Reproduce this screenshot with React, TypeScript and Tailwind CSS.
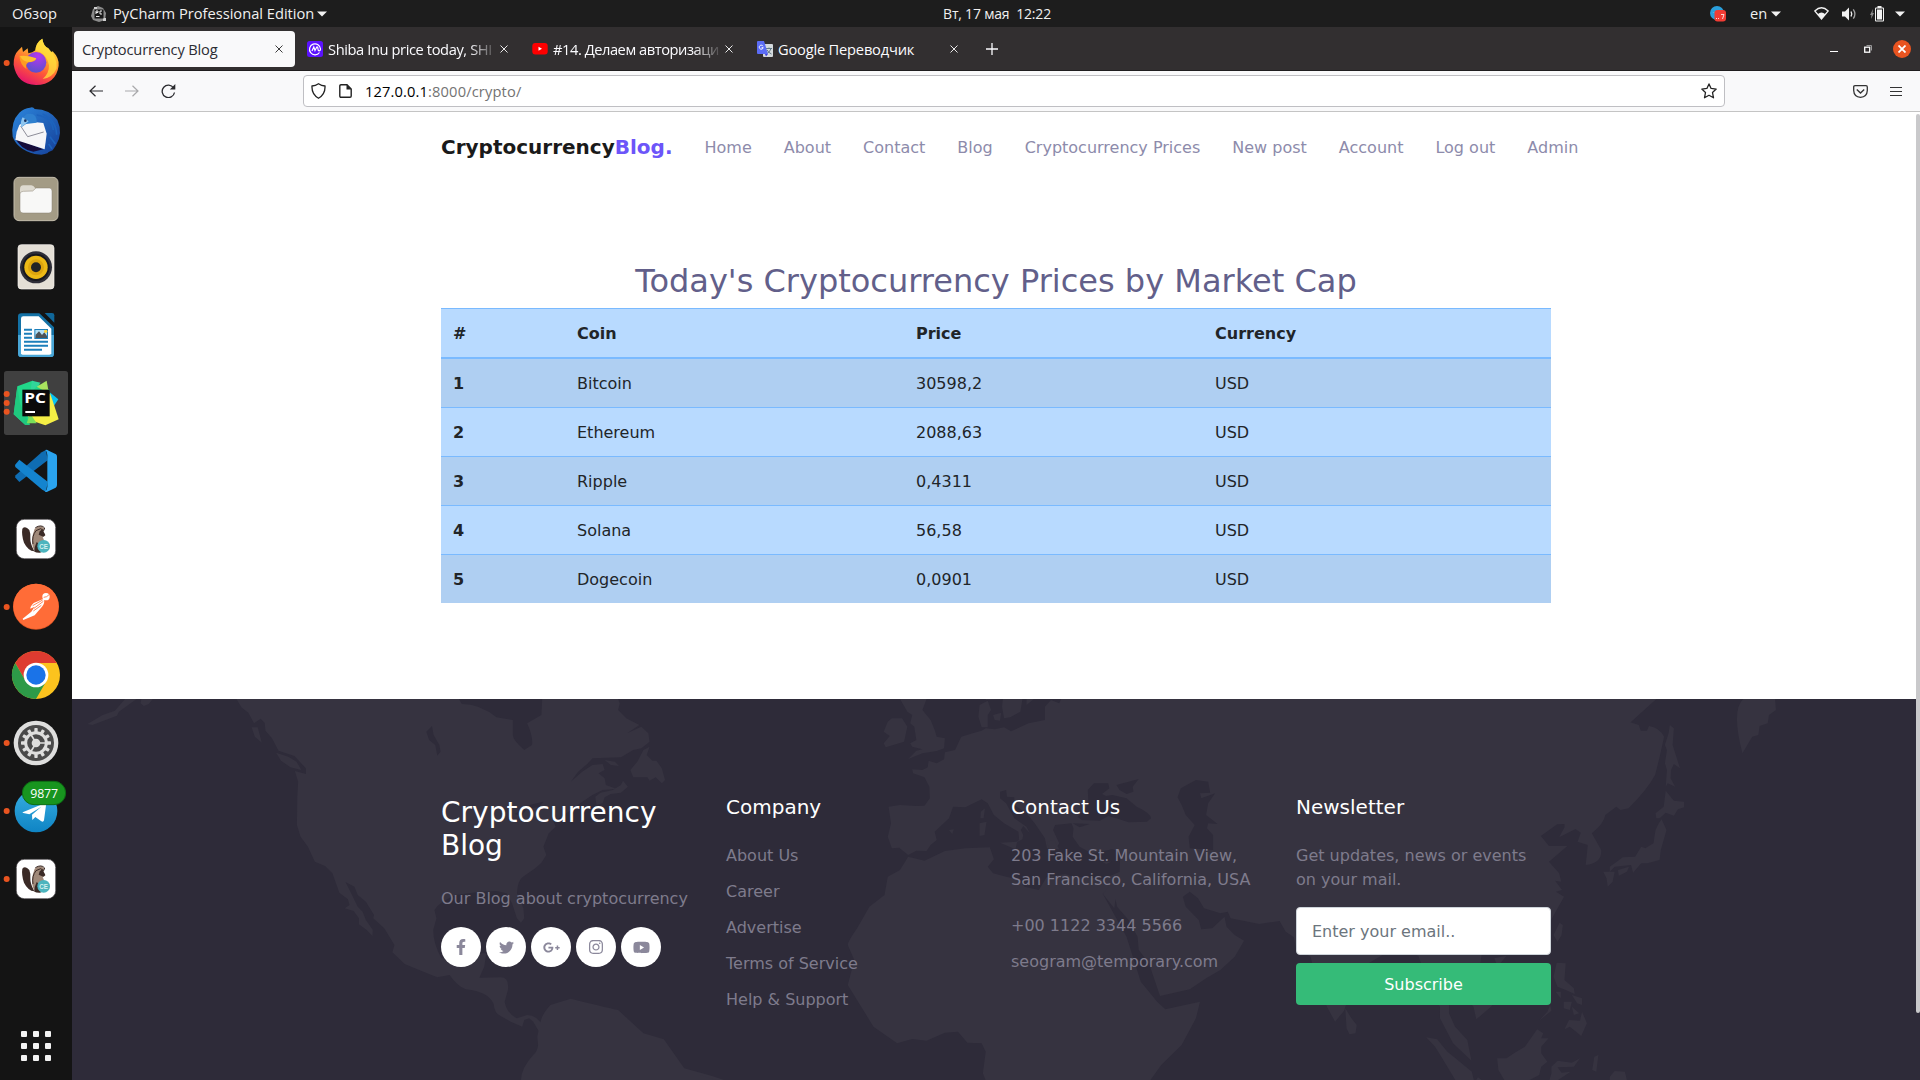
import type { ReactNode } from 'react';
import { FaFacebookF, FaTwitter, FaGooglePlusG, FaInstagram, FaYoutube } from 'react-icons/fa';

const SHELL = "font-['Open_Sans','Noto_Sans',sans-serif]";

/* ---------- Dock ---------- */

function DockItem({ y, dots = 0, active = false, children }: { y: number; dots?: number; active?: boolean; children: ReactNode }) {
  const c = y + 102;
  return (
    <svg className="block h-[68px] w-[72px] shrink-0" viewBox={`0 ${y} 216 204`}>
      {active && <rect x="12" y={y + 6} width="192" height="192" rx="8" fill="#404040" />}
      {children}
      {dots === 1 && <circle cx="20" cy={c} r="9" fill="#e95420" />}
      {dots === 3 && [-27, 0, 26].map((d) => <circle key={d} cx="20" cy={c + d} r="9" fill="#e95420" />)}
    </svg>
  );
}

function Beaver() {
  return (
    <g>
      <rect x="49" y="478" width="118" height="118" rx="24" fill="#fff" stroke="#4b474b" strokeWidth="2" />
      <path d="M67 506Q76 496 88 510Q92 520 91 534Q90 550 103 574Q84 572 72 548Q64 524 67 506Z" fill="#3a2a26" />
      <path d="M104 506Q114 496 126 499L133 506L130 514L136 527L128 531L134 545L126 577L104 574Q92 552 98 526Z" fill="#a08979" />
      <path d="M106 503Q124 492 134 504L131 512L122 506L108 512Q95 528 99 552" fill="none" stroke="#3a2a26" strokeWidth="3" />
      <path d="M127 508L136 525L130 530L116 524L119 514Z" fill="#3a2a26" />
      <path d="M103 575Q102 562 110 546L122 556L122 578Q110 579 103 575Z" fill="#3a2a26" />
      <circle cx="131" cy="559" r="19" fill="#4cb4be" />
      <text x="118" y="567" textLength="26" lengthAdjust="spacingAndGlyphs" fontSize="22" fontWeight="700" fill="#d6f1ef" fontFamily="Liberation Sans, sans-serif">CE</text>
    </g>
  );
}

function Dock() {
  const teeth = Array.from({ length: 12 }, (_, i) => i * 30);
  return (
    <aside className="flex w-[72px] shrink-0 flex-col bg-[#141414] pt-[2px]">
      <DockItem y={27} dots={1}>
        <defs>
          <linearGradient id="ffBody" x1="0.8" y1="0" x2="0.3" y2="1">
            <stop offset="0" stopColor="#fff44f" />
            <stop offset="0.35" stopColor="#ffb02e" />
            <stop offset="0.65" stopColor="#ff5b36" />
            <stop offset="1" stopColor="#e4126f" />
          </linearGradient>
          <radialGradient id="ffGlobe" cx="0.6" cy="0.2" r="0.9">
            <stop offset="0" stopColor="#b438ee" />
            <stop offset="1" stopColor="#5153c8" />
          </radialGradient>
        </defs>
        <path d="M54 92L66 80L69 96L83 85L85 100Q98 98 106 91Q108 67 127 56Q130 78 145 85L153 97L158 94Q178 114 176 137Q168 193 108 195Q50 192 41 134Q40 105 54 92Z" fill="url(#ffBody)" />
        <path d="M106 91Q108 67 127 56Q130 78 145 85Q172 110 170 145Q158 174 128 177Q148 160 147 136Q142 102 106 91Z" fill="#ffdf3c" opacity="0.75" />
        <circle cx="108" cy="127" r="31" fill="url(#ffGlobe)" />
        <path d="M58 107Q84 106 108 116Q105 126 86 127Q74 133 80 148Q60 134 58 107Z" fill="#ff9b22" />
        <path d="M60 108Q84 105 109 115Q106 123 90 126Q68 126 60 108Z" fill="#ffc02f" />
      </DockItem>
      <DockItem y={231}>
        <defs>
          <linearGradient id="tb" x1="0" y1="0" x2="1" y2="1">
            <stop offset="0" stopColor="#2c86dc" />
            <stop offset="1" stopColor="#153f98" />
          </linearGradient>
        </defs>
        <path d="M90 263Q100 260 104 267Q150 268 172 300Q190 340 168 376L158 391L146 396L142 400L134 402L124 404L104 402Q52 388 38 350Q32 304 58 278Q72 264 90 263Z" fill="url(#tb)" />
        <path d="M44 350Q60 388 100 395L130 388L52 358Z" fill="#160c3a" />
        <path d="M58 315L74 303L130 309L140 341L134 388L46 359L50 335Z" fill="#f6f6f8" />
        <path d="M62 318L83 350L131 336" fill="none" stroke="#8d8d99" strokeWidth="3" />
        <path d="M80 282Q112 276 110 308L78 312L64 322Q62 296 80 282Z" fill="#2f80cf" />
        <path d="M64 322Q60 304 68 292L86 304L76 312Z" fill="#8fc5ee" />
        <circle cx="76" cy="302" r="4" fill="#17305d" />
        <path d="M110 285Q156 292 160 330M128 282Q168 300 170 344M150 350L166 372M146 372L156 386" fill="none" stroke="#1d63bd" strokeWidth="5" />
      </DockItem>
      <DockItem y={435}>
        <rect x="42" y="472" width="132" height="130" rx="15" fill="#a39b85" stroke="#c4bdac" strokeWidth="3" />
        <path d="M60 508Q60 496 70 496L94 496Q100 496 106 505L146 505L146 540L60 540Z" fill="#dedad0" />
        <path d="M60 522Q60 514 70 514L98 513L108 504L148 504Q156 504 156 513L156 570Q156 579 147 579L69 579Q60 579 60 570Z" fill="#f8f8f7" stroke="#888171" strokeWidth="1.5" />
      </DockItem>
      <DockItem y={639}>
        <rect x="54" y="674" width="108" height="133" rx="10" fill="#e4dfd6" stroke="#f7f5f1" strokeWidth="2" />
        <circle cx="108" cy="742" r="48" fill="#2e2e38" />
        <circle cx="108" cy="742" r="41" fill="#18181e" />
        <circle cx="108" cy="742" r="35" fill="#edb916" />
        <circle cx="108" cy="742" r="24" fill="#dda40e" />
        <circle cx="108" cy="742" r="15" fill="#222226" />
      </DockItem>
      <DockItem y={843}>
        <path d="M64 880H118L162 922V1001Q162 1011 152 1011H64Q54 1011 54 1001V890Q54 880 64 880Z" fill="#1371a5" />
        <path d="M54 945H162V1001Q162 1011 152 1011H64Q54 1011 54 1001Z" fill="#49a6d6" />
        <path d="M63 896Q63 889 70 889H116L154 926V1000Q154 1004 148 1004H68Q63 1004 63 1000Z" fill="#fff" />
        <path d="M134 879H156Q163 879 163 886V908Z" fill="#10679a" />
        <path d="M72 929H96M72 941H96M72 953H96M72 965H144M72 977H144M72 989H126" stroke="#1c7fbb" strokeWidth="6" />
        <rect x="103" y="927" width="41" height="30" fill="#1c7fbb" />
        <rect x="106" y="930" width="35" height="24" fill="#b2e0f6" />
        <path d="M106 954L107 944L117 934L126 945L133 937L141 948V954Z" fill="#4c5358" />
        <circle cx="137" cy="934" r="5" fill="#ffd338" />
      </DockItem>
      <DockItem y={27} dots={3} active>
        <path d="M52 79L97 62L150 90L90 190L76 195L41 163Z" fill="#21d789" />
        <path d="M52 79L60 130L90 195L76 195L41 163Z" fill="#1fc87f" />
        <path d="M110 80L140 62L145 90L146 100Z" fill="#a8e35f" />
        <path d="M148 96L175 118L160 140Z" fill="#07c3f2" />
        <path d="M158 122L176 178L136 196L96 182L80 165L150 100Z" fill="#f5ef45" />
        <path d="M96 62L122 68L90 100Z" fill="#31d59a" />
        <path d="M90 160L110 190L80 190Z" fill="#79e05a" />
        <rect x="67" y="89" width="82" height="80" fill="#0b0b0b" />
        <text x="73" y="130" textLength="65" lengthAdjust="spacingAndGlyphs" fontSize="44" fontWeight="700" fill="#fff" fontFamily="Open Sans, sans-serif">PC</text>
        <rect x="76" y="153" width="29" height="6" fill="#fff" />
      </DockItem>
      <DockItem y={231}>
        <path d="M45 352L58 366L143 301L138 270L125 277L47 346Z" fill="#0f6db3" />
        <path d="M45 315L58 299L143 365L138 396L125 388L46 321Z" fill="#1484cf" />
        <path d="M136 270Q141 268 146 272L168 283Q171 286 171 290V375Q171 380 167 383L142 395Q138 397 135 394Q142 390 142 380V285Q142 274 136 270Z" fill="#2aa3ee" />
      </DockItem>
      <DockItem y={435}><Beaver /></DockItem>
      <DockItem y={639} dots={1}>
        <circle cx="108" cy="740" r="69" fill="#d95222" />
        <circle cx="108" cy="739" r="68" fill="#ff6c37" />
        <circle cx="138" cy="710" r="11" fill="#fff" />
        <path d="M131 716L101 729Q90 740 91 746L104 740L94 755L68 776L70 780L104 766L126 740Q136 728 131 716Z" fill="#fff" />
        <path d="M98 737L128 720M102 745L130 724M100 753L124 736M131 712L140 710L147 704" stroke="#ff6c37" strokeWidth="2.5" fill="none" />
      </DockItem>
      <DockItem y={843}>
        <circle cx="108" cy="945" r="72" fill="#fcc31e" />
        <path d="M45.600 909A72 72 0 0 1 170.400 909L108 909L76.800 963Z" fill="#de3b30" />
        <path d="M45.600 909A72 72 0 0 0 108 1017L139.200 963L108 981L76.800 963Z" fill="#2d9a48" />
        <circle cx="108" cy="945" r="37" fill="#fff" />
        <circle cx="108" cy="945" r="29" fill="#1a73e8" />
      </DockItem>
      <DockItem y={27} dots={1}>
        <circle cx="108" cy="129" r="67" fill="#dededd" />
        <circle cx="108" cy="129" r="54" fill="#4a4a4a" />
        {teeth.map((a) => <rect key={a} x="103" y="84" width="10" height="14" rx="2" fill="#dededd" transform={`rotate(${a} 108 129)`} />)}
        <circle cx="108" cy="129" r="31" fill="none" stroke="#dededd" strokeWidth="9" />
        <circle cx="108" cy="129" r="13" fill="#dededd" />
        <path d="M108 129H139M108 129L92 102M108 129L92 156" stroke="#dededd" strokeWidth="5" />
      </DockItem>
      <DockItem y={231} dots={1}>
        <defs>
          <linearGradient id="tg" x1="0" y1="0" x2="0" y2="1">
            <stop offset="0" stopColor="#37aee2" />
            <stop offset="1" stopColor="#0f84c4" />
          </linearGradient>
        </defs>
        <circle cx="108" cy="333" r="64" fill="url(#tg)" />
        <path d="M68 337L134 310Q140 308 138 316L132 361Q130 368 124 364L106 351L97 360L96 344L124 320L88 343L70 339Q66 338 68 337Z" fill="#fff" />
        <rect x="67" y="244" width="130" height="70" rx="35" fill="#18951f" stroke="#0c6d13" strokeWidth="3" />
        <text x="91" y="293" textLength="83" fontSize="37" fill="#fff" fontFamily="Open Sans, sans-serif">9877</text>
      </DockItem>
      <DockItem y={435} dots={1}><Beaver /></DockItem>
      <div className="mt-auto mb-[19px] grid grid-cols-[repeat(3,6px)] gap-[6px] self-center">
        {Array.from({ length: 9 }, (_, i) => <span key={i} className="size-[6px] rounded-[1px] bg-[#f2f2f2]" />)}
      </div>
    </aside>
  );
}

/* ---------- Desktop top bar ---------- */

function Caret({ className = '' }: { className?: string }) {
  return (
    <svg className={`h-[6px] w-[10px] shrink-0 ${className}`} viewBox="0 0 10 6"><path d="M0 0.500H10L5 5.500Z" fill="#f2f2f2" /></svg>
  );
}

function TopBar() {
  return (
    <header className={`grid h-[27px] shrink-0 grid-cols-[1fr_auto_1fr] items-center bg-[#1d1d1d] text-[14.67px] leading-[27px] text-[#f0f0f0] ${SHELL}`}>
      <div className="flex items-center pl-[12px]">
        <span className="w-[79px]">Обзор</span>
        <svg className="mr-[6px] size-4" viewBox="0 0 16 16">
          <path d="M2 3L7 0L12 2L15 7L14 14L8 16L2 14L0 10Z" fill="#8b8b8b" />
          <path d="M3 1H6V3H3ZM12 12H15V15H12Z" fill="#cfcfcf" />
          <rect x="3.500" y="3.500" width="9" height="9" fill="#191919" />
          <path d="M5 8V5H7V6.500H5M11 5H9V8H11M5 10.500H8.500" fill="none" stroke="#eee" />
        </svg>
        <span className="w-[204px] whitespace-nowrap">PyCharm Professional Edition</span>
        <Caret />
      </div>
      <span className="whitespace-pre pl-[74px] text-[14px] tracking-[-0.2px]">Вт, 17 мая  12:22</span>
      <div className="flex items-center justify-end pr-[15px]">
        <svg className="mr-[24px] size-4" viewBox="0 0 16 16">
          <circle cx="7" cy="7" r="7" fill="#2a9fdb" />
          <path d="M2.500 7L8 4.500V6H4Z" fill="#fff" />
          <rect x="4.500" y="4" width="11.500" height="11.500" rx="3" fill="#f23c34" />
          <path d="M6 12.500H7M8 12.500H9M11 8.500H14L12.500 13" stroke="#ffd9d5" fill="none" />
        </svg>
        <span className="w-[21px]">en</span>
        <Caret className="mr-[33px]" />
        <svg className="mr-[13px] h-[13px] w-[15px]" viewBox="0 0 15 13">
          <path d="M0.800 4Q7.500 -2.500 14.200 4L7.500 12Z" fill="none" stroke="#f2f2f2" strokeWidth="1.300" />
          <path d="M3.600 7.200Q7.500 4 11.400 7.200L7.500 12Z" fill="#f2f2f2" />
        </svg>
        <svg className="mr-[14px] h-[14px] w-[14px]" viewBox="0 0 14 14">
          <path d="M0 4.500H3L7 0.500V13.500L3 9.500H0Z" fill="#f2f2f2" />
          <path d="M9 4.500Q10.500 7 9 9.500" fill="none" stroke="#f2f2f2" strokeWidth="1.400" />
          <path d="M11.300 2.300Q14.500 7 11.300 11.700" fill="none" stroke="#a2a2a2" strokeWidth="1.300" />
        </svg>
        <svg className="mr-[11px] h-[16px] w-[14px]" viewBox="0 0 14 16">
          <path d="M3 3L0 9H1.500L1 13L4 7H2.500Z" fill="#8a8a8a" />
          <path d="M7.500 0H11.500V1.500H13Q14 1.500 14 2.500V14.500Q14 15.500 13 15.500H6Q5 15.500 5 14.500V2.500Q5 1.500 6 1.500H7.500Z" fill="#f2f2f2" />
          <rect x="6" y="2.500" width="7" height="12" fill="#1d1d1d" />
          <rect x="7" y="3.500" width="5" height="10" fill="#f2f2f2" />
        </svg>
        <Caret />
      </div>
    </header>
  );
}

/* ---------- Browser chrome ---------- */

function Close({ color }: { color: string }) {
  return (
    <svg className="size-[8px] shrink-0" viewBox="0 0 8 8"><path d="M0.500 0.500L7.500 7.500M7.500 0.500L0.500 7.500" stroke={color} /></svg>
  );
}

function Tab({ icon, title, fade = false, spacing = '' }: { icon: ReactNode; title: string; fade?: boolean; spacing?: string }) {
  return (
    <div className="mr-1 flex h-[36px] w-[221px] items-center pl-[8px] pr-[12px] text-[#fbfbfe]">
      {icon}
      <span className={`ml-[5px] w-[172px] whitespace-nowrap ${spacing} ${fade ? '[mask-image:linear-gradient(to_right,black_82%,transparent_99%)]' : ''}`}>{title}</span>
      <span className="ml-auto flex"><Close color="#e8e8e8" /></span>
    </div>
  );
}

function TabStrip() {
  return (
    <div className={`flex h-[44px] items-start border-b border-[#1f1d1e] bg-[#322f30] pl-[2px] pt-[4px] text-[14.67px] ${SHELL}`}>
      <div className="mr-1 flex h-[36px] w-[221px] items-center justify-between rounded-[4px] bg-[#f9f9fa] pl-[8px] pr-[12px] text-[#2c2c33]">
        <span className="whitespace-nowrap tracking-[-0.18px]">Cryptocurrency Blog</span>
        <Close color="#3c3c3c" />
      </div>
      <Tab
        fade
        title="Shiba Inu price today, SHI"
        spacing="tracking-[-0.4px]"
        icon={
          <svg className="size-4 shrink-0" viewBox="0 0 16 16">
            <rect width="16" height="16" rx="2.500" fill="#5b12ff" />
            <path d="M12.500 11.500A5.500 5.500 0 1 1 13.500 8Q13.500 9.800 12.300 9.800Q11 9.800 11 8.200Q10.800 5.500 9.800 6L8 9.500L6.800 6L5 10" fill="none" stroke="#fff" strokeWidth="1.200" />
          </svg>
        }
      />
      <Tab
        fade
        title="#14. Делаем авторизаци"
        spacing="tracking-[-0.45px]"
        icon={
          <svg className="size-4 shrink-0" viewBox="0 0 16 16">
            <rect x="0.300" y="2" width="15.400" height="11.500" rx="3" fill="#f00" />
            <path d="M6.500 5.800L10 7.800L6.500 9.800Z" fill="#fff" />
          </svg>
        }
      />
      <Tab
        title="Google Переводчик"
        spacing="tracking-[-0.2px]"
        icon={
          <svg className="size-4 shrink-0" viewBox="0 0 16 16">
            <rect x="6" y="3" width="10" height="13" rx="1" fill="#d5dadd" />
            <path d="M9 7.500H15M12 6.500V7.500M14 7.500Q13 11 9.500 13M10 9Q12 12 14.500 13" fill="none" stroke="#607988" strokeWidth="1" />
            <path d="M1 0H7L11 13H1Q0 13 0 12V1Q0 0 1 0Z" fill="#5b6cf5" />
            <path d="M8 13H11L9 15.500Z" fill="#3d3ddb" />
            <path d="M6 5.200A2 2 0 1 0 6.200 6.700H4.600" fill="none" stroke="#fff" strokeWidth="1" />
          </svg>
        }
      />
      <svg className="ml-[12px] mt-[12px] size-[12px]" viewBox="0 0 12 12"><path d="M6 0V12M0 6H12" stroke="#fbfbfe" strokeWidth="1.300" /></svg>
      <div className="ml-auto flex h-[36px] items-center pr-[9px]">
        <span className="mt-[4px] mr-[26px] h-px w-[8px] bg-white" />
        <svg className="mr-[21px] size-[8px]" viewBox="0 0 8 8">
          <rect x="0.700" y="2.200" width="5" height="5" fill="none" stroke="#fff" strokeWidth="1.300" />
          <path d="M2.500 0.500H7.500V5.500" fill="none" stroke="#999" />
        </svg>
        <span className="flex size-[18px] items-center justify-center rounded-full bg-[#e95420]">
          <svg className="size-[8px]" viewBox="0 0 8 8"><path d="M0.500 0.500L7.500 7.500M7.500 0.500L0.500 7.500" stroke="#fff" strokeWidth="1.800" /></svg>
        </span>
      </div>
    </div>
  );
}

function Toolbar() {
  return (
    <div className={`flex h-[41px] items-center border-b border-[#c4c4c4] bg-[#f9f9fa] pl-[17px] ${SHELL}`}>
      <svg className="mr-[22px] h-[12px] w-[14px]" viewBox="0 0 14 12"><path d="M14 6H1M6.500 0.700L1 6L6.500 11.300" fill="none" stroke="#2b2b2f" strokeWidth="1.200" /></svg>
      <svg className="mr-[22px] h-[12px] w-[14px]" viewBox="0 0 14 12"><path d="M0 6H13M7.500 0.700L13 6L7.500 11.300" fill="none" stroke="#a9a9ab" strokeWidth="1.200" /></svg>
      <svg className="h-[14px] w-[15px]" viewBox="0 0 15 14">
        <path d="M12.600 4A6.200 6.200 0 1 0 13.500 8.500" fill="none" stroke="#2b2b2f" strokeWidth="1.300" />
        <path d="M14.300 0V5.500H8.800Z" fill="#2b2b2f" />
      </svg>
      <div className="ml-[127px] flex h-[32px] w-[1422px] items-center rounded-[4px] border border-[#bfbfc3] bg-white pl-[7px] pr-[7px] text-[14.67px]">
        <svg className="mr-[13px] h-[16px] w-[15px]" viewBox="0 0 15 16"><path d="M7.500 0.800Q10.500 2.800 14 3Q14.500 11.500 7.500 15.200Q0.500 11.500 1 3Q4.500 2.800 7.500 0.800Z" fill="none" stroke="#222" strokeWidth="1.300" /></svg>
        <svg className="mr-[13px] h-[14px] w-[13px]" viewBox="0 0 13 14">
          <path d="M2 0.700H8L12.200 5V12Q12.200 13.300 11 13.300H2Q0.800 13.300 0.800 12V2Q0.800 0.700 2 0.700Z" fill="none" stroke="#222" strokeWidth="1.400" />
          <path d="M7.500 0.700V5.500H12.200Z" fill="#222" />
        </svg>
        <span className="whitespace-nowrap tracking-[0.14px] text-[#737373]"><span className="text-black">127.0.0.1</span>:8000/crypto/</span>
        <svg className="ml-auto size-[16px]" viewBox="0 0 16 16"><path d="M8 0.900L10.100 5.400L15.200 6.100L11.500 9.500L12.500 14.800L8 12.300L3.500 14.800L4.500 9.500L0.800 6.100L5.900 5.400Z" fill="none" stroke="#222" strokeWidth="1.300" strokeLinejoin="round" /></svg>
      </div>
      <svg className="ml-auto mr-[22px] h-[13px] w-[15px]" viewBox="0 0 15 13">
        <path d="M2 0.700H13Q14.300 0.700 14.300 2V5.500Q14 12 7.500 12.300Q1 12 0.700 5.500V2Q0.700 0.700 2 0.700Z" fill="none" stroke="#333" strokeWidth="1.300" />
        <path d="M3.800 4.500L7.500 8L11.200 4.500" fill="none" stroke="#333" strokeWidth="1.400" />
      </svg>
      <div className="mr-[18px] flex w-[12px] flex-col gap-[3px]">
        <span className="h-px bg-[#333]" /><span className="h-px bg-[#333]" /><span className="h-px bg-[#333]" />
      </div>
    </div>
  );
}

/* ---------- Page ---------- */

const NAV = ['Home', 'About', 'Contact', 'Blog', 'Cryptocurrency Prices', 'New post', 'Account', 'Log out', 'Admin'];

const ROWS = [
  ['1', 'Bitcoin', '30598,2', 'USD'],
  ['2', 'Ethereum', '2088,63', 'USD'],
  ['3', 'Ripple', '0,4311', 'USD'],
  ['4', 'Solana', '56,58', 'USD'],
  ['5', 'Dogecoin', '0,0901', 'USD'],
];

function WorldMap() {
  return (
    <svg className="absolute inset-0 h-[381px] w-[1848px]" viewBox="0 0 1848 381" fill="#363340">
      <g transform="translate(0 -9) scale(0.408163 0.333333)">
        <path d="M403 27L415 52L432 68L446 100L462 86L472 98L474 122L490 145L506 182L545 198L573 235V252L546 243L554 275L552 320L551 405L560 440L578 470L595 515L620 528L638 550L655 608L676 628L680 645L668 655L690 663L703 685V703L722 720L736 738L737 720L720 690L712 665L700 650L680 600L670 576L692 590L700 615L720 635L740 675L738 685L765 715L790 765L785 787L815 822Q860 845 895 862L925 855Q945 890 965 898Q1020 905 1033 942Q1035 970 1050 978L1075 995L1103 1010L1108 990L1120 985L1130 995L1143 1022L1140 1040L1142 1065Q1140 1085 1130 1095Q1100 1135 1100 1171H1600L1568 1158L1500 1135L1450 1048L1400 1030L1338 960Q1300 950 1222 926L1172 945Q1150 975 1148 997Q1135 975 1115 975L1090 985Q1065 970 1060 935L1068 900Q1072 862 1050 862L998 863L1010 830L1015 790H975L950 810L905 805Q885 760 885 720L893 685L888 660Q900 635 940 615L1000 605L1040 603L1065 610L1078 640L1090 685L1100 698L1108 685L1106 655L1090 610Q1092 570 1105 560L1135 535L1150 518L1162 495L1155 470L1168 430L1185 410L1180 395L1205 375L1245 340L1275 315L1300 300L1335 297L1308 285L1305 265L1290 250L1305 240L1300 222L1275 225L1250 245L1222 275L1240 245Q1270 215 1275 205L1345 202L1375 180L1395 175L1415 155L1412 130L1395 110L1360 130L1390 105L1358 85L1338 60L1342 40L1338 27H1152L1150 75L1115 100Q1130 140 1127 165L1108 180Q1080 150 1080 135V90L1040 82Q1000 42 955 42L948 27Z" />
        <path d="M440 112H455L460 135L465 158L448 140ZM500 188L530 200L550 215L562 240L535 232L512 212ZM130 27H158L115 65L110 77L50 105L38 102L75 75L105 62ZM170 27H198L188 42L176 48L168 40ZM1415 170L1408 195L1422 212H1432L1445 235L1453 270L1445 280L1430 262L1415 272L1410 262H1375L1368 240L1385 215L1400 180ZM1285 345L1282 320L1295 308L1325 300L1345 285L1350 272L1362 290L1345 308L1320 312L1305 322L1300 340ZM1305 210L1330 215L1340 228L1320 225Z" />
        <path d="M882 108L868 125L875 150L890 165L895 197L903 185L900 165L886 135ZM1085 372L1120 345L1155 335L1145 350L1115 358L1100 378Z" fill="#2e2b39" />
      </g>
      <g transform="translate(628 -9) scale(0.408163 0.333333)">
        <path d="M885 27L880 40L860 30L845 50V90L805 100L762 124L745 112L722 118L700 115L690 122L668 130L640 140L625 180L600 187L598 208L580 220L560 212L558 232L545 240L520 238L522 250L550 262L562 290L563 325L550 347L530 348L490 345L462 350L468 400L460 440L470 475L488 473L510 495L530 482L555 483L565 465L580 450L575 425L610 385L620 350L650 352L690 328L705 340L720 375L745 400L780 425L782 450L770 460L790 448L792 435L786 420L792 408L808 430L800 410L770 385L750 340L735 325V305L750 300L752 320L770 322V345L800 370L820 400L845 445L850 475L870 480L880 460L865 420L870 405L910 400L915 415L913 440L930 470L960 490L1010 478L1030 485L1028 545L1000 570L987 612L1015 655L1018 628L1022 650L1050 690L1072 740L1075 780L1100 820L1127 918L1200 898L1240 865L1275 840L1310 800L1333 752L1310 735L1290 710L1285 680L1255 715L1228 718L1222 690L1190 650L1183 620L1200 605L1220 625L1235 655L1275 670L1293 665L1300 685L1370 702L1420 693L1435 725L1455 742L1460 775L1496 800L1510 870L1536 950L1556 995L1578 962L1584 940L1600 860L1640 818L1700 775L1760 797L1775 850L1813 950V985L1845 1060L1890 1112L1880 1050L1850 1010L1835 970V945L1860 900L1895 950L1902 988L1940 948L1945 900L1910 830L1915 795L1980 785L2045 740L2085 690L2117 620L2097 605L2112 600L2095 572L2110 575L2105 550L2080 515L2125 468L2080 468L2060 438L2100 403L2118 402V412L2105 442L2145 417L2158 428L2150 455L2175 465L2170 525Q2210 520 2208 480L2185 430Q2215 400 2218 375L2245 350L2255 360L2275 355Q2320 300 2340 255Q2350 210 2362 140Q2350 112 2325 108L2320 122H2305L2300 105L2280 97L2343 27Z" />
        <path d="M1028 545L1005 558L985 568L945 560L920 563L895 552L850 560L830 600L795 590L780 568L750 560L718 550L705 530L720 508L710 472L650 475L600 483L550 512L510 500L490 540L460 560L452 615L415 650L385 715Q362 755 362 765L378 810L362 885L425 1010L483 1060L520 1047L555 1052L600 1028L632 1025L655 1058L690 1060L700 1085L693 1150L700 1171H1103L1130 1125L1180 1065L1215 985L1225 935L1140 958L1120 935L1080 875L1045 740L987 612Z" />
        <path d="M490 27H555L545 60L565 90L575 120L580 140L600 145L598 175L580 183L545 190L510 207L530 182L545 178L520 170L515 160L530 150L525 110L515 100L520 75L508 65ZM460 95L470 85H495L508 110L500 155L455 172L450 160L465 138L450 125ZM700 30L742 27L740 50L745 85L760 82L785 65L790 27H845V20H700ZM690 112L682 80L685 45L705 32L713 60L705 75V112ZM718 75L738 68L735 92L722 90ZM800 27H818L800 45ZM685 400L702 395L697 435L685 438ZM688 365L698 355L695 385L687 385ZM735 458L777 455L773 478ZM610 420L622 418L618 432ZM985 515L1008 515L995 522ZM0 1155L40 1171H0ZM850 455L868 450L880 478H855Z" />
        <path d="M950 300L965 280H1000L1003 295L985 312L995 318L1010 315L1045 325L1070 350Q1105 370 1105 385L1095 395L1050 397L1020 385L1000 378L980 392L935 390L925 380L940 360L952 342ZM1020 285L1075 267L1060 290L1062 305L1045 312L1028 300ZM1170 322L1178 295L1215 270L1245 275L1250 308L1225 310L1228 325L1262 310L1245 340L1240 375L1268 402L1245 400L1242 415L1257 435V480L1200 475L1197 440L1212 405L1190 375L1180 345ZM913 400L955 402L930 412Z" fill="#2e2b39" />
      </g>
      <g transform="translate(1208 -9) scale(0.408163 0.333333)">
        <path d="M955 105L965 115L962 165L980 235L965 222L958 240L957 265L968 290L950 280L945 290L948 240L943 220L948 180L943 165L952 130ZM945 302L965 332L990 335V352L975 358L965 377L945 368L930 385H922L920 370L940 350ZM935 388L947 420L940 450L933 480L930 510L900 520L885 520L865 548L860 525L820 530L808 545V530L840 502L870 500L885 470L895 475L915 460L920 420L928 400ZM792 545L820 545L815 575L803 590L800 565ZM828 540L855 530L850 545L830 557ZM1135 27H1213L1215 60L1198 75L1195 100L1175 108L1172 135L1157 140L1133 190Q1105 60 1135 27ZM685 698L693 705L690 735L680 755L670 735ZM525 805L555 797L540 820H530ZM678 818L700 820L697 870L720 895L722 912L700 900L680 890L670 860ZM675 905H688V925ZM695 935L715 935L710 960L695 955ZM715 915L740 925V945L728 940ZM715 950L733 970L720 975ZM740 965L752 1000L738 1038L720 1020L710 1010L697 1018L708 990L735 992ZM635 992L655 965L662 945L665 962ZM630 1018L645 1030L640 1045H658L640 1070V1090L655 1115L640 1130L635 1155L610 1171H550L535 1140L532 1105H555L575 1088L600 1070ZM358 1042L385 1048L410 1085L430 1105L470 1145L475 1171H430L400 1110L380 1070ZM665 1130L680 1112L715 1118L735 1105L720 1130L680 1132L690 1148L712 1145L680 1171H660L665 1150ZM770 1100L780 1095L775 1145L765 1140ZM808 1160L820 1143L845 1145L850 1171H808ZM160 955L175 985L188 1005L185 1030L170 1033L163 1015ZM480 1171L485 1162L495 1171Z" />
      </g>
    </svg>
  );
}

function Footer() {
  const socials = [
    <FaFacebookF size={16} />,
    <FaTwitter size={15} />,
    <FaGooglePlusG size={17} />,
    <FaInstagram size={16} />,
    <FaYoutube size={17} />,
  ];
  return (
    <footer className="relative h-[381px] overflow-hidden bg-[#2e2b39] text-[16px] leading-[24px] text-[#7e7b8c]">
      <WorldMap />
      <div className="relative mx-auto grid w-[1110px] grid-cols-[repeat(4,255px)] gap-[30px] pt-[96px]">
        <section>
          <h3 className="pt-px text-[28px] leading-[33px] text-white">Cryptocurrency Blog</h3>
          <p className="mt-[25px] whitespace-nowrap">Our Blog about cryptocurrency</p>
          <div className="mt-[16px] flex gap-[5px]">
            {socials.map((icon, i) => (
              <span key={i} className="flex size-[40px] items-center justify-center rounded-full bg-white text-[#8b889b]">{icon}</span>
            ))}
          </div>
        </section>
        <section>
          <h4 className="text-[20px] leading-[24px] text-white">Company</h4>
          <ul className="mt-[25px] flex flex-col gap-[12px]">
            {['About Us', 'Career', 'Advertise', 'Terms of Service', 'Help & Support'].map((t) => <li key={t}>{t}</li>)}
          </ul>
        </section>
        <section>
          <h4 className="text-[20px] leading-[24px] text-white">Contact Us</h4>
          <p className="mt-[25px] whitespace-nowrap">203 Fake St. Mountain View,<br />San Francisco, California, USA</p>
          <p className="mt-[22px]">+00 1122 3344 5566</p>
          <p className="mt-[12px]">seogram@temporary.com</p>
        </section>
        <section>
          <h4 className="text-[20px] leading-[24px] text-white">Newsletter</h4>
          <p className="mt-[25px]">Get updates, news or events on your mail.</p>
          <div className="mt-[15px] flex h-[48px] items-center rounded-[4px] border border-[#ced4da] bg-white px-[15px] pt-[2px] text-[#6c757d]">Enter your email..</div>
          <button className="mt-[8px] block h-[42px] w-full rounded-[4px] bg-[#35bb78] pt-[2px] text-white">Subscribe</button>
        </section>
      </div>
    </footer>
  );
}

function Page() {
  return (
    <main className="relative h-[968px] overflow-hidden bg-white font-['DejaVu_Sans',sans-serif] text-[16px]">
      <nav className="mx-auto flex h-[70px] w-[1140px] items-center whitespace-nowrap pl-[15px]">
        <a className="mr-[16px] text-[20px] font-bold text-[#1a1a1a]">Cryptocurrency<span className="text-[#6c55f9]">Blog.</span></a>
        {NAV.map((n) => <a key={n} className="px-[16px] pt-[2px] text-[#8d8bab]">{n}</a>)}
      </nav>
      <div className="mx-auto h-[517px] w-[1110px] pt-[80px]">
        <h2 className="h-[46px] text-center text-[32px] leading-[38px] text-[#625f8a]">Today's Cryptocurrency Prices by Market Cap</h2>
        <table className="w-[1110px] table-fixed border-separate border-spacing-0 text-left leading-[24px] text-[#212529]">
          <colgroup>
            <col className="w-[124px]" /><col className="w-[339px]" /><col className="w-[299px]" /><col className="w-[348px]" />
          </colgroup>
          <thead>
            <tr className="bg-[#b8daff]">
              {['#', 'Coin', 'Price', 'Currency'].map((h) => <th key={h} className="border-b-2 border-t border-[#7abaff] px-[12px] pb-[11px] pt-[13px] font-bold">{h}</th>)}
            </tr>
          </thead>
          <tbody>
            {ROWS.map((r) => (
              <tr key={r[0]} className="group bg-[#b8daff] odd:bg-[#afcff2]">
                {r.map((c, i) => <td key={i} className="border-t border-[#7abaff] px-[12px] pb-[11px] pt-[13px] first:font-bold group-first:border-t-0">{c}</td>)}
              </tr>
            ))}
          </tbody>
        </table>
      </div>
      <Footer />
      <div className="absolute right-0 top-[2px] h-[899px] w-[4px] rounded-full bg-[#c9c9cb]" />
    </main>
  );
}

export default function App() {
  return (
    <div className="flex h-[1080px] w-[1920px] flex-col overflow-hidden bg-[#141414]">
      <TopBar />
      <div className="flex min-h-0 flex-1">
        <Dock />
        <div className="flex w-[1848px] flex-col">
          <TabStrip />
          <Toolbar />
          <Page />
        </div>
      </div>
    </div>
  );
}
